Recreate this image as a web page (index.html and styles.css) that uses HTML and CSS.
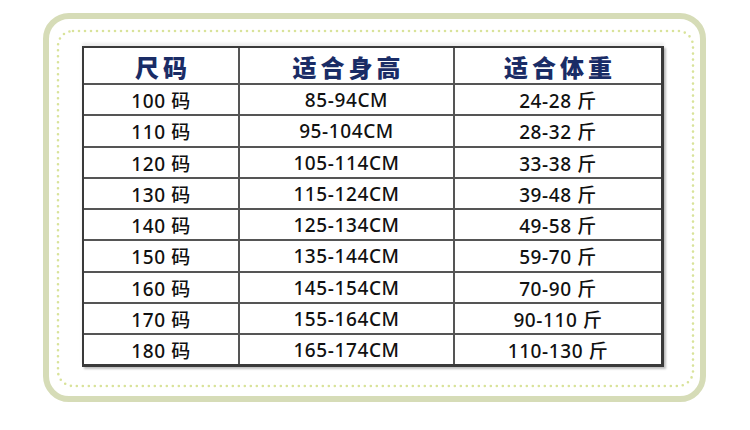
FILE: index.html
```html
<!DOCTYPE html>
<html lang="zh">
<head>
<meta charset="utf-8">
<link rel="stylesheet" href="styles.css">
</head>
<body>
<div class="frame">
  <svg class="dots" width="651" height="377" viewBox="0 0 651 377" aria-hidden="true">
    <rect x="9" y="12" width="635" height="355" rx="15" ry="15" fill="none" stroke="#d9e39a" stroke-width="2.6" stroke-linecap="round" stroke-dasharray="0 6"/>
  </svg>
  <div class="dotted">
    <div class="table">
      <div class="row head">
        <div class="cell">尺码</div>
        <div class="cell">适合身高</div>
        <div class="cell">适合体重</div>
      </div>
      <div class="row"><div class="cell">100 码</div><div class="cell">85-94CM</div><div class="cell">24-28 斤</div></div>
      <div class="row"><div class="cell">110 码</div><div class="cell">95-104CM</div><div class="cell">28-32 斤</div></div>
      <div class="row"><div class="cell">120 码</div><div class="cell">105-114CM</div><div class="cell">33-38 斤</div></div>
      <div class="row"><div class="cell">130 码</div><div class="cell">115-124CM</div><div class="cell">39-48 斤</div></div>
      <div class="row"><div class="cell">140 码</div><div class="cell">125-134CM</div><div class="cell">49-58 斤</div></div>
      <div class="row"><div class="cell">150 码</div><div class="cell">135-144CM</div><div class="cell">59-70 斤</div></div>
      <div class="row"><div class="cell">160 码</div><div class="cell">145-154CM</div><div class="cell">70-90 斤</div></div>
      <div class="row"><div class="cell">170 码</div><div class="cell">155-164CM</div><div class="cell">90-110 斤</div></div>
      <div class="row last"><div class="cell">180 码</div><div class="cell">165-174CM</div><div class="cell">110-130 斤</div></div>
    </div>
  </div>
</div>
</body>
</html>
```
FILE: styles.css
```css
html, body {
  margin: 0;
  padding: 0;
  background: #ffffff;
}
body {
  width: 750px;
  height: 430px;
  font-family: "Noto Sans", "Noto Sans CJK SC", sans-serif;
}
.frame {
  position: relative;
  margin: 13px 0 0 43px;
  width: 663px;
  height: 389px;
  box-sizing: border-box;
  border: 6px solid #d6dcb7;
  border-radius: 26px;
}
.dots {
  position: absolute;
  left: 0;
  top: 0;
  pointer-events: none;
}
.dotted {
  height: 100%;
  box-sizing: border-box;
  padding: 27px 36px 29px 33px;
}
.table {
  position: relative;
  height: 321px;
  border: 2px solid #3a3a3a;
  border-right-width: 3px;
  border-bottom-width: 3px;
  box-shadow: 2px 2px 2px rgba(0,0,0,0.25), 0 -3px 3px rgba(0,0,0,0.08);
  display: flex;
  flex-direction: column;
  background: #fff;
  box-sizing: border-box;
}
.row {
  display: grid;
  grid-template-columns: 156px 215px 1fr;
  height: 31.3px;
  border-bottom: 2px solid #555;
  box-sizing: border-box;
}
.row.last { border-bottom: none; flex: 1; }
.row.head { height: 37px; }
.cell {
  display: flex;
  align-items: center;
  justify-content: center;
  font-size: 19px;
  font-weight: 500;
  color: #111;
  letter-spacing: 0.6px;
  border-right: 2px solid #555;
  padding-top: 1px;
}
.cell:last-child { border-right: none; }
.head .cell {
  font-family: "Noto Sans CJK SC", sans-serif;
  font-weight: 900;
  font-size: 24px;
  color: #1a2c66;
  letter-spacing: 4px;
  padding-left: 4px;
}
```
